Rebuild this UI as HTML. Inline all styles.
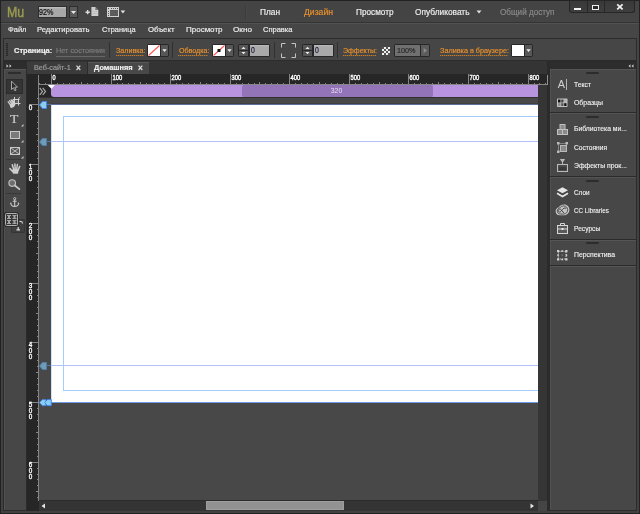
<!DOCTYPE html>
<html lang="ru"><head><meta charset="utf-8"><title>Adobe Muse</title>
<style>
html,body{margin:0;padding:0;}
body{width:640px;height:514px;overflow:hidden;background:#454545;font-family:"Liberation Sans",sans-serif;font-size:8.6px;color:#ededed;position:relative;}
.a{position:absolute;}
.t{position:absolute;white-space:nowrap;line-height:12px;height:12px;transform-origin:0 0;-webkit-text-stroke:0.18px currentColor;}
.o{color:#e8912d;}
.g{color:#8a8a8a;}
.ul{height:1px;background:repeating-linear-gradient(90deg,#c07a28 0,#c07a28 1px,#7a5a35 1px,#7a5a35 2px);}
svg{position:absolute;overflow:visible;}
</style></head><body>
<!-- window frame -->
<div class="a" style="left:0;top:0;width:640px;height:514px;background:#222222;"></div>
<div class="a" style="left:1px;top:1px;width:638px;height:512px;background:#414141;"></div>
<div class="a" style="left:1px;top:1px;width:638px;height:60px;background:#454545;"></div>
<div class="a" style="left:3px;top:61px;width:634px;height:450px;background:#2b2b2b;"></div>

<!-- app bar -->
<div id="appbar" class="a" style="left:1px;top:1px;width:638px;height:21px;background:#444444;"></div>
<div class="t" id="mu" style="left:6.8px;top:2.600px;font-size:14.700px;line-height:18px;height:18px;color:#9c9b50;-webkit-text-stroke:0.450px #9c9b50;transform:scaleX(0.843);">Mu</div>
<div class="a" style="left:38px;top:6px;width:29px;height:12px;background:linear-gradient(#c4c4c4 0,#a8a8a8 2px,#a8a8a8 100%);border:1px solid #2e2e2e;box-sizing:border-box;"></div>
<div class="t" id="zm" style="left:39.2px;top:6.400px;color:#111;font-size:8.800px;-webkit-text-stroke:0.2px #111;transform:scaleX(0.818);">92%</div>
<div class="a" style="left:69px;top:6px;width:9px;height:12px;background:#5a5a5a;border:1px solid #2e2e2e;box-sizing:border-box;"></div>
<svg style="left:69px;top:6px" width="9" height="12"><path d="M2 5h5l-2.5 3z" fill="#e8e8e8"/></svg>
<!-- add page icon -->
<svg style="left:84px;top:7px" width="16" height="11"><path d="M1.500 5.200h4.300M3.650 3.100v4.200" stroke="#dcdcdc" stroke-width="1.400" fill="none"/><path d="M7.400 0.100h4l2.900 2.900v6h-6.900z" fill="#cdcdcd"/><path d="M11.400 0.100v2.900h2.900z" fill="#6e6e6e"/><path d="M8.500 4.500h4.500M8.500 6.500h4.500" stroke="#b4b4b4" stroke-width="0.600"/></svg>
<!-- layout icon -->
<svg style="left:107px;top:7px" width="20" height="11"><rect x="0" y="0" width="12" height="10" fill="#d0d0d0"/><rect x="3" y="3" width="8" height="6" fill="#585858"/><path d="M3 5h8M3 7h8" stroke="#6a6a6a" stroke-width="0.600"/><path d="M1 1h1v1h-1zM4 1h1v1h-1zM6 1h1v1h-1zM8 1h1v1h-1zM10 1h1v1h-1zM1 4h1v1h-1zM1 6h1v1h-1zM1 8h1v1h-1z" fill="#555"/><path d="M13.600 3.400h4.600l-2.300 3z" fill="#e4e4e4"/></svg>
<div class="a" style="left:245px;top:6px;width:1px;height:13px;background:#3a3a3a;"></div>
<div class="a" style="left:246px;top:6px;width:1px;height:13px;background:#4a4a4a;"></div>
<div class="t" id="n1" style="left:260px;top:6px;font-size:8.500px;transform:scaleX(0.976);">План</div>
<div class="t o" id="n2" style="left:304px;top:6px;font-size:8.500px;transform:scaleX(1.015);">Дизайн</div>
<div class="t" id="n3" style="left:356px;top:6px;font-size:8.500px;transform:scaleX(0.966);">Просмотр</div>
<div class="t" id="n4" style="left:414.5px;top:6px;font-size:8.500px;transform:scaleX(0.981);">Опубликовать</div>
<svg style="left:476px;top:10px" width="7" height="5"><path d="M0.5 0.5h5l-2.5 3z" fill="#e0e0e0"/></svg>
<div class="t g" id="n5" style="left:500px;top:6px;font-size:8.500px;transform:scaleX(0.954);">Общий доступ</div>
<!-- window buttons -->
<div class="a" style="left:569px;top:0;width:66px;height:13px;background:linear-gradient(#383838,#3e3e3e);border:1px solid #262626;border-top:none;border-radius:0 0 3px 3px;box-sizing:border-box;"></div>
<div class="a" style="left:569px;top:0;width:66px;height:1px;background:#262626;"></div>
<div class="a" style="left:587px;top:1px;width:1px;height:11px;background:#282828;"></div>
<div class="a" style="left:604px;top:1px;width:1px;height:11px;background:#282828;"></div>
<div class="a" style="left:574px;top:8px;width:7px;height:2px;background:#f2f2f2;"></div>
<div class="a" style="left:592px;top:5px;width:7px;height:5px;border:1.500px solid #f2f2f2;box-sizing:border-box;background:#2c2c2c;"></div>
<svg style="left:616px;top:4px" width="8" height="6"><path d="M1.200 0.400l5.400 5M6.600 0.400l-5.400 5" stroke="#f2f2f2" stroke-width="1.700"/></svg>

<!-- menu bar -->
<div class="a" style="left:1px;top:22px;width:638px;height:1px;background:#343434;"></div><div class="a" style="left:1px;top:23px;width:638px;height:1px;background:#525252;"></div>
<div class="a" style="left:1px;top:24px;width:638px;height:14px;background:#464646;"></div>
<div class="t" id="m1" style="font-size:8px;left:7.5px;top:24px;transform:scaleX(0.940);">Файл</div>
<div class="t" id="m2" style="font-size:8px;left:37px;top:24px;transform:scaleX(0.950);">Редактировать</div>
<div class="t" id="m3" style="font-size:8px;left:102px;top:24px;transform:scaleX(0.924);">Страница</div>
<div class="t" id="m4" style="font-size:8px;left:147.5px;top:24px;transform:scaleX(0.972);">Объект</div>
<div class="t" id="m5" style="font-size:8px;left:185.5px;top:24px;transform:scaleX(0.999);">Просмотр</div>
<div class="t" id="m6" style="font-size:8px;left:233px;top:24px;transform:scaleX(1.022);">Окно</div>
<div class="t" id="m7" style="font-size:8px;left:263px;top:24px;transform:scaleX(0.940);">Справка</div>

<!--CBSTART-->
<!-- control bar -->
<div class="a" style="left:3px;top:38px;width:634px;height:23px;background:#464646;border:1px solid #2c2c2c;box-sizing:border-box;"></div>
<div class="a" style="left:6px;top:43px;width:2px;height:13px;background:repeating-linear-gradient(#2a2a2a 0,#2a2a2a 1px,#383838 1px,#383838 2px);"></div>
<div class="t" id="c1" style="font-size:7.700px;left:13.75px;top:45.200px;font-weight:bold;color:#f2f2f2;transform:scaleX(0.973);">Страница:</div>
<div class="t" id="c2" style="font-size:7.400px;left:55.5px;top:45.200px;color:#7e7e7e;transform:scaleX(0.983);">Нет состояния</div>
<div class="a" style="left:56px;top:56px;width:49px;height:1px;background:#686868;"></div>
<div class="a" style="left:109px;top:42px;width:1px;height:16px;background:#303030;"></div>
<div class="t o" id="c3" style="font-size:7.400px;left:115.5px;top:45.200px;transform:scaleX(0.967);">Заливка:</div>
<div class="a" style="left:147px;top:44px;width:22px;height:13px;background:#272727;border-radius:2px;"></div>
<div class="a" style="left:148px;top:45px;width:12px;height:11px;background:#fff;"></div>
<svg style="left:148px;top:45px" width="12" height="11"><path d="M0.500 10.500L11.500 0.500" stroke="#f55" stroke-width="1.100"/></svg>
<div class="a" style="left:161px;top:45px;width:7px;height:11px;background:#575757;"></div>
<svg style="left:161px;top:45px" width="7" height="11"><path d="M1.300 4.300h4.400l-2.200 2.600z" fill="#ececec"/></svg>
<div class="a" style="left:172px;top:42px;width:1px;height:16px;background:#303030;"></div>
<div class="t o" id="c4" style="font-size:7.400px;left:178.5px;top:45.200px;transform:scaleX(0.963);">Обводка:</div>
<div class="a" style="left:212px;top:44px;width:22px;height:13px;background:#272727;border-radius:2px;"></div>
<div class="a" style="left:213px;top:45px;width:12px;height:11px;background:#fff;"></div>
<svg style="left:213px;top:45px" width="12" height="11"><path d="M0.500 10.500L11.500 0.500" stroke="#f55" stroke-width="1.100"/><rect x="4.500" y="4" width="3" height="3" fill="#111"/></svg>
<div class="a" style="left:226px;top:45px;width:7px;height:11px;background:#575757;"></div>
<svg style="left:226px;top:45px" width="7" height="11"><path d="M1.300 4.300h4.400l-2.200 2.600z" fill="#ececec"/></svg>
<div class="a" style="left:238px;top:44px;width:32px;height:13px;background:#272727;border-radius:2px;"></div>
<div class="a" style="left:239px;top:45px;width:9px;height:5px;background:#565656;"></div>
<div class="a" style="left:239px;top:51px;width:9px;height:5px;background:#565656;"></div>
<svg style="left:239px;top:45px" width="9" height="11"><path d="M2.500 4l2-2.200 2 2.200zM2.500 7l2 2.200 2-2.200z" fill="#ececec"/></svg>
<div class="a" style="left:250px;top:45px;width:19px;height:11px;background:linear-gradient(#bcbcbc 0,#a9a9a9 2px);"></div>
<div class="t" style="left:251.2px;top:43.600px;font-size:8.600px;color:#16163c;transform:scaleX(0.800);">0</div>
<div class="a" style="left:274px;top:42px;width:1px;height:16px;background:#303030;"></div>
<svg style="left:281px;top:43px" width="15" height="15"><path d="M0.500 4.500V0.500H4.500M10.500 0.500h4V4.500M14.500 10.500v4H10.500M4.500 14.500H0.500V10.500" stroke="#c4c4c4" stroke-width="1" fill="none"/></svg>
<div class="a" style="left:302px;top:44px;width:32px;height:13px;background:#272727;border-radius:2px;"></div>
<div class="a" style="left:303px;top:45px;width:9px;height:5px;background:#565656;"></div>
<div class="a" style="left:303px;top:51px;width:9px;height:5px;background:#565656;"></div>
<svg style="left:303px;top:45px" width="9" height="11"><path d="M2.500 4l2-2.200 2 2.200zM2.500 7l2 2.200 2-2.200z" fill="#ececec"/></svg>
<div class="a" style="left:314px;top:45px;width:19px;height:11px;background:linear-gradient(#bcbcbc 0,#a9a9a9 2px);"></div>
<div class="t" style="left:315.2px;top:43.600px;font-size:8.600px;color:#16163c;transform:scaleX(0.800);">0</div>
<div class="a" style="left:337px;top:42px;width:1px;height:16px;background:#303030;"></div>
<div class="t o" id="c5" style="font-size:7.400px;left:343px;top:45.200px;transform:scaleX(0.954);">Эффекты:</div>
<svg style="left:382px;top:47px" width="8" height="8"><rect width="8" height="8" fill="#f0f0f0"/><path d="M0 0h2v2H0zM4 0h2v2H4zM2 2h2v2H2zM6 2h2v2H6zM0 4h2v2H0zM4 4h2v2H4zM2 6h2v2H2zM6 6h2v2H6z" fill="#555"/></svg>
<div class="a" style="left:394px;top:44px;width:36px;height:13px;background:#272727;border-radius:2px;"></div>
<div class="a" style="left:395px;top:45px;width:25px;height:11px;background:#707070;"></div>
<div class="t" id="pc" style="font-size:7.400px;left:397px;top:44.700px;color:#2a2a2a;transform:scaleX(0.979);">100%</div>
<div class="a" style="left:421px;top:45px;width:8px;height:11px;background:#5c5c5c;"></div>
<svg style="left:421px;top:45px" width="8" height="11"><path d="M2.700 3l3.300 2.500-3.300 2.500z" fill="#8c8c8c"/></svg>
<div class="t o" id="c6" style="font-size:7.400px;left:440px;top:45.200px;transform:scaleX(0.982);">Заливка в браузере:</div>
<div class="a" style="left:511px;top:44px;width:22px;height:13px;background:#272727;border-radius:2px;"></div>
<div class="a" style="left:512px;top:45px;width:12px;height:11px;background:#fff;"></div>
<div class="a" style="left:525px;top:45px;width:7px;height:11px;background:#575757;"></div>
<svg style="left:525px;top:45px" width="7" height="11"><path d="M1.300 4.300h4.400l-2.200 2.600z" fill="#ececec"/></svg>
<div class="a ul" style="left:116px;top:55px;width:28px;"></div>
<div class="a ul" style="left:178px;top:55px;width:30px;"></div>
<div class="a ul" style="left:343px;top:55px;width:33px;"></div>
<div class="a ul" style="left:440px;top:55px;width:68px;"></div>
<!--CBEND-->
<!--WORKSTART-->
<!-- tab bar -->
<div class="a" style="left:27px;top:61px;width:522px;height:13px;background:#343434;"></div>
<div class="a" style="left:27px;top:62px;width:60px;height:12px;background:#3b3b3b;"></div>
<div class="a" style="left:87px;top:61px;width:1px;height:13px;background:#2b2b2b;"></div>
<div class="a" style="left:88px;top:62px;width:61px;height:12px;background:#484848;border-top:1px solid #585858;box-sizing:border-box;"></div>
<div class="t" id="tb1" style="left:33.8px;top:62px;color:#9d9d9d;font-size:7.400px;transform:scaleX(0.980);">Веб-сайт-1</div>
<svg style="left:75.500px;top:65px" width="5" height="6"><path d="M0.500 0.600l3.800 4.400M4.300 0.600l-3.800 4.400" stroke="#dadada" stroke-width="1.250"/></svg>
<div class="t" id="tb2" style="left:93.6px;top:62px;color:#f0f0f0;font-weight:bold;font-size:7.400px;transform:scaleX(1.005);">Домашняя</div>
<svg style="left:138px;top:65px" width="5" height="6"><path d="M0.500 0.600l3.800 4.400M4.300 0.600l-3.800 4.400" stroke="#dadada" stroke-width="1.250"/></svg>
<!-- rulers -->
<div class="a" style="left:27px;top:74px;width:521px;height:24px;background:#262626;"></div>
<div class="a" style="left:26px;top:74px;width:13px;height:437px;background:#262626;"></div>
<div class="a" style="left:39px;top:98px;width:499px;height:403px;background:#484848;"></div>
<svg style="left:0;top:0;filter:grayscale(1)" width="640" height="514" font-family="Liberation Sans, sans-serif" font-size="6.900" fill="#ffffff" stroke="#ffffff" stroke-width="0.35"><g stroke="#858585" stroke-width="1" shape-rendering="crispEdges"><path d="M38.500 75V501"/><path d="M39 84.500H548"/><path d="M547.500 75V84"/><path d="M39.5 83V84M45.5 83V84M51.5 74V84M57.5 83V84M63.5 83V84M69.5 83V84M75.5 83V84M81.5 82V84M87.5 83V84M93.5 83V84M99.5 83V84M105.5 83V84M111.5 74V84M117.5 83V84M122.5 83V84M128.5 83V84M134.5 83V84M140.5 82V84M146.5 83V84M152.5 83V84M158.5 83V84M164.5 83V84M170.5 74V84M176.5 83V84M182.5 83V84M188.5 83V84M194.5 83V84M200.5 82V84M206.5 83V84M212.5 83V84M218.5 83V84M224.5 83V84M230.5 74V84M236.5 83V84M242.5 83V84M248.5 83V84M254.5 83V84M259.5 82V84M265.5 83V84M271.5 83V84M277.5 83V84M283.5 83V84M289.5 74V84M295.5 83V84M301.5 83V84M307.5 83V84M313.5 83V84M319.5 82V84M325.5 83V84M331.5 83V84M337.5 83V84M343.5 83V84M349.5 74V84M355.5 83V84M361.5 83V84M367.5 83V84M373.5 83V84M379.5 82V84M385.5 83V84M391.5 83V84M397.5 83V84M402.5 83V84M408.5 74V84M414.5 83V84M420.5 83V84M426.5 83V84M432.5 83V84M438.5 82V84M444.5 83V84M450.5 83V84M456.5 83V84M462.5 83V84M468.5 74V84M474.5 83V84M480.5 83V84M486.5 83V84M492.5 83V84M498.5 82V84M504.5 83V84M510.5 83V84M516.5 83V84M522.5 83V84M528.5 74V84M534.5 83V84M539.5 83V84M545.5 83V84"/><path d="M37 98.5H38M29 104.5H38M37 110.5H38M37 116.5H38M37 122.5H38M37 128.5H38M36 134.5H38M37 140.5H38M37 146.5H38M37 152.5H38M37 158.5H38M29 164.5H38M37 170.5H38M37 176.5H38M37 181.5H38M37 187.5H38M36 193.5H38M37 199.5H38M37 205.5H38M37 211.5H38M37 217.5H38M29 223.5H38M37 229.5H38M37 235.5H38M37 241.5H38M37 247.5H38M36 253.5H38M37 259.5H38M37 265.5H38M37 271.5H38M37 277.5H38M29 283.5H38M37 289.5H38M37 295.5H38M37 301.5H38M37 307.5H38M36 313.5H38M37 319.5H38M37 325.5H38M37 330.5H38M37 336.5H38M29 342.5H38M37 348.5H38M37 354.5H38M37 360.5H38M37 366.5H38M36 372.5H38M37 378.5H38M37 384.5H38M37 390.5H38M37 396.5H38M29 402.5H38M37 408.5H38M37 414.5H38M37 420.5H38M37 426.5H38M36 432.5H38M37 438.5H38M37 444.5H38M37 450.5H38M37 456.5H38M29 462.5H38M37 468.5H38M37 474.5H38M37 479.5H38M37 485.5H38M36 491.5H38M37 497.5H38"/></g><text x="52.6" y="80.100" textLength="3.1" lengthAdjust="spacingAndGlyphs">0</text><text x="112.6" y="80.100" textLength="9.7" lengthAdjust="spacingAndGlyphs">100</text><text x="171.6" y="80.100" textLength="9.7" lengthAdjust="spacingAndGlyphs">200</text><text x="231.6" y="80.100" textLength="9.7" lengthAdjust="spacingAndGlyphs">300</text><text x="290.6" y="80.100" textLength="9.7" lengthAdjust="spacingAndGlyphs">400</text><text x="350.6" y="80.100" textLength="9.7" lengthAdjust="spacingAndGlyphs">500</text><text x="409.6" y="80.100" textLength="9.7" lengthAdjust="spacingAndGlyphs">600</text><text x="469.6" y="80.100" textLength="9.7" lengthAdjust="spacingAndGlyphs">700</text><text x="529.6" y="80.100" textLength="9.7" lengthAdjust="spacingAndGlyphs">800</text><text x="28.700" stroke-width="0.3" y="109.6" font-size="6.4">0</text><text x="28.700" stroke-width="0.3" y="169.1" font-size="6.3">1</text><text x="28.700" stroke-width="0.3" y="174.8" font-size="6.3">0</text><text x="28.700" stroke-width="0.3" y="180.5" font-size="6.3">0</text><text x="28.700" stroke-width="0.3" y="228.1" font-size="6.3">2</text><text x="28.700" stroke-width="0.3" y="233.8" font-size="6.3">0</text><text x="28.700" stroke-width="0.3" y="239.5" font-size="6.3">0</text><text x="28.700" stroke-width="0.3" y="288.1" font-size="6.3">3</text><text x="28.700" stroke-width="0.3" y="293.8" font-size="6.3">0</text><text x="28.700" stroke-width="0.3" y="299.5" font-size="6.3">0</text><text x="28.700" stroke-width="0.3" y="347.1" font-size="6.3">4</text><text x="28.700" stroke-width="0.3" y="352.8" font-size="6.3">0</text><text x="28.700" stroke-width="0.3" y="358.5" font-size="6.3">0</text><text x="28.700" stroke-width="0.3" y="407.1" font-size="6.3">5</text><text x="28.700" stroke-width="0.3" y="412.8" font-size="6.3">0</text><text x="28.700" stroke-width="0.3" y="418.5" font-size="6.3">0</text><text x="28.700" stroke-width="0.3" y="467.1" font-size="6.3">6</text><text x="28.700" stroke-width="0.3" y="472.8" font-size="6.3">0</text><text x="28.700" stroke-width="0.3" y="478.5" font-size="6.3">0</text></svg>
<!-- breakpoint bar -->
<div class="a" style="left:51px;top:85px;width:487px;height:12px;background:#b793e0;border-radius:3px 0 0 3px;"></div>
<div class="a" style="left:242px;top:85px;width:191px;height:12px;background:#9474b8;border-radius:2px;"></div>
<div class="t" style="left:321.500px;top:84.700px;width:30px;text-align:center;font-size:6.800px;color:#e6dcf2;line-height:12px;-webkit-text-stroke:0;filter:grayscale(0);">320</div>
<svg style="left:39px;top:85px" width="18" height="12"><path d="M8.700 0h7.300l-3.650 3.800z" fill="#fff"/><path d="M0.700 2.800l2.800 3.600-2.800 3.600M3.700 2.800l2.800 3.600-2.800 3.600" stroke="#b0b0b0" stroke-width="1.100" fill="none"/></svg>
<div class="a" style="left:39px;top:97px;width:499px;height:1px;background:#303030;"></div>
<div class="a" style="left:51px;top:103px;width:487px;height:1px;background:#3f3f3f;"></div>
<div class="a" style="left:47px;top:104px;width:491px;height:1px;background:#5b6f98;"></div>
<!-- page -->
<div class="a" style="left:51px;top:105px;width:487px;height:298px;background:#fff;overflow:hidden;"><div class="a" style="left:0;top:0;width:1px;height:298px;background:#cfe2f8;"></div><div class="a" style="left:12px;top:11px;width:600px;height:273px;border:1px solid #a3ccff;"></div><div class="a" style="left:0;top:36px;width:487px;height:1px;background:#b2c2f8;"></div><div class="a" style="left:0;top:260px;width:487px;height:1px;background:#b2c2f8;"></div><div class="a" style="left:0;top:297px;width:487px;height:1px;background:#6f9ae8;"></div></div>
<div class="a" style="left:46px;top:141px;width:5px;height:1px;background:#55789f;"></div>
<div class="a" style="left:46px;top:365px;width:5px;height:1px;background:#55789f;"></div>
<svg style="left:39px;top:101px" width="9" height="8"><path d="M0.500 4L3.500 0.500H7.500V7.500H3.500z" fill="#8acff2" stroke="#3d86ea" stroke-width="1"/></svg>
<svg style="left:39px;top:138px" width="9" height="8"><path d="M0.500 4L3.500 0.500H7.500V7.500H3.500z" fill="#6e9bb8" stroke="#4f7fa8" stroke-width="1"/></svg>
<svg style="left:39px;top:362px" width="9" height="8"><path d="M0.500 4L3.500 0.500H7.500V7.500H3.500z" fill="#6e9bb8" stroke="#4f7fa8" stroke-width="1"/></svg>
<svg style="left:39px;top:399px" width="13" height="8"><path d="M0.400 3.600L3.300 0.600H7V6.700H3.300z" fill="#8acff2" stroke="#3d7eea" stroke-width="0.900"/><path d="M5.700 3.600L8.300 0.600H12.300V6.700H8.300z" fill="#8acff2" stroke="#3d7eea" stroke-width="0.900"/></svg>
<!-- scrollbars -->
<div class="a" style="left:538px;top:85px;width:9px;height:416px;background:#353535;"></div>
<div class="a" style="left:547px;top:61px;width:3px;height:450px;background:#2b2b2b;"></div>
<div class="a" style="left:547px;top:75px;width:1px;height:10px;background:#8e8e8e;"></div>
<div class="a" style="left:39px;top:500px;width:499px;height:11px;background:#343434;border-top:1px solid #2c2c2c;box-sizing:border-box;"></div>
<div class="a" style="left:538px;top:501px;width:9px;height:10px;background:#454545;"></div>
<div class="a" style="left:206px;top:501px;width:138px;height:9px;background:#929292;border:1px solid #9e9e9e;box-sizing:border-box;"></div>
<svg style="left:41px;top:503px" width="5" height="6"><path d="M4 0.500v5L0.500 3z" fill="#e6e6e6"/></svg>
<svg style="left:530px;top:503px" width="5" height="6"><path d="M0.500 0.500v5L4 3z" fill="#e6e6e6"/></svg>
<!--WORKEND-->
<!--TBSTART-->
<!-- left toolbar -->
<div class="a" style="left:3px;top:61px;width:24px;height:450px;background:#2b2b2b;"></div>
<div class="a" style="left:3px;top:62px;width:24px;height:7px;background:#2d2d2d;"></div>
<svg style="left:6px;top:64px" width="6" height="4"><path d="M0.500 0.300l2 1.700-2 1.700zM3.500 0.300l2 1.700-2 1.700z" fill="#c8c8c8"/></svg>
<div class="a" style="left:4px;top:69px;width:22px;height:441px;background:#474747;border-top:1px solid #565656;border-left:1px solid #505050;box-sizing:border-box;"></div>
<div class="a" style="left:8px;top:72px;width:13px;height:2px;background:#2e2e2e;"></div>
<div class="a" style="left:6px;top:79px;width:17px;height:15px;background:#353535;border:1px solid #2c2c2c;box-sizing:border-box;"></div>
<!-- selection arrow -->
<svg style="left:10px;top:80px" width="10" height="13"><path d="M1.500 1.200v8.300l2-1.800 1.300 3 1.300-0.600-1.300-2.900h2.700z" fill="#2a2a2a" stroke="#b4b4b4" stroke-width="0.900" stroke-linejoin="round"/></svg>
<!-- crop tool -->
<svg style="left:7px;top:96px" width="15" height="13"><path d="M7.500 1v7M6 3.500h6.500M11.500 2.500v7M7 7.500h6.500" stroke="#d2d2d2" stroke-width="1" fill="none"/><path d="M13.200 0.800l-2.200 2.400" stroke="#bdbdbd" stroke-width="0.900"/><rect x="8.500" y="4.500" width="2.500" height="2.500" fill="#6a6a6a"/><path d="M1.200 5.800l2.300 3M2.600 4.600l2.300 3.200M4.200 3.900l1.900 3.300M5.800 4l1.200 3" stroke="#d0d0d0" stroke-width="1.300" stroke-linecap="round" fill="none"/><path d="M2.600 8.200l4.600-2 1.300 2.300-1.600 2.600-2.400 1-1.200-0.600z" fill="#d0d0d0"/></svg>
<!-- text tool -->
<div class="t" style="left:9.500px;top:112px;font-family:'Liberation Serif',serif;font-size:13px;line-height:13px;height:13px;color:#cdcdcd;transform:scaleX(1.05);">T</div>
<svg style="left:21px;top:124px" width="3" height="3"><path d="M2.500 0v2.500H0z" fill="#c8c8c8"/></svg>
<!-- rectangle tool -->
<div class="a" style="left:10px;top:131px;width:10px;height:8px;background:#7a7a7a;border:1px solid #c8c8c8;box-sizing:border-box;"></div>
<svg style="left:21px;top:140px" width="3" height="3"><path d="M2.500 0v2.500H0z" fill="#c8c8c8"/></svg>
<!-- placeholder tool -->
<svg style="left:10px;top:147px" width="10" height="8"><rect x="0.500" y="0.500" width="9" height="7" fill="#555" stroke="#c8c8c8"/><path d="M1 1l8 6M9 1l-8 6" stroke="#c8c8c8" stroke-width="0.900"/></svg>
<svg style="left:21px;top:156px" width="3" height="3"><path d="M2.500 0v2.500H0z" fill="#c8c8c8"/></svg>
<div class="a" style="left:6px;top:159px;width:15px;height:1px;background:#383838;"></div>
<!-- hand tool -->
<svg style="left:9px;top:163px" width="12" height="11"><g stroke="#cdcdcd" stroke-width="1.500" stroke-linecap="round" fill="none"><path d="M0.900 5.600l3 3M3.300 1.800l1.500 5M5.900 1l0.300 6M8.400 1.500l-0.800 5.500M10.700 3.400l-1.700 4"/></g><path d="M3.300 6.500h6.400l-0.700 4.200h-4.600l-1.600-2.700z" fill="#cdcdcd"/></svg>
<!-- zoom tool -->
<svg style="left:8px;top:179px" width="13" height="11"><circle cx="4.200" cy="4.100" r="3.300" fill="#6e6e6e" stroke="#c4c4c4" stroke-width="1.100"/><path d="M6.800 6.500l4.600 3.600" stroke="#c8c8c8" stroke-width="1.800" stroke-linecap="round"/></svg>
<div class="a" style="left:6px;top:193px;width:15px;height:1px;background:#383838;"></div>
<!-- anchor -->
<svg style="left:10px;top:197px" width="10" height="11"><circle cx="4.700" cy="1.700" r="1.100" fill="none" stroke="#cbcbcb" stroke-width="0.900"/><path d="M4.700 2.800v6.500M2.700 4.300h4M0.700 6.300c0.300 2.200 1.800 3.200 4 3.200s3.700-1 4-3.200" fill="none" stroke="#cbcbcb" stroke-width="1.100"/><path d="M0 6.800l0.800-1.500 1.200 1.200zM9.400 6.800l-0.800-1.500-1.200 1.200z" fill="#cbcbcb"/></svg>
<!-- align widget -->
<div class="a" style="left:11px;top:219px;width:14px;height:14px;background:#3f3f3f;border:1px solid #353535;box-sizing:border-box;border-radius:1px;"></div>
<svg style="left:11px;top:219px" width="14" height="14"><path d="M8.500 2.500h1.500q1.500 0 1.500 2" fill="none" stroke="#e0e0e0" stroke-width="1.100"/><path d="M7.200 8v2.500M5.500 10.800h3.500" stroke="#e0e0e0" stroke-width="1.200" fill="none"/></svg>
<div class="a" style="left:4px;top:212px;width:15px;height:15px;background:#2e2e2e;border-radius:2px;"></div>
<div class="a" style="left:5px;top:213px;width:13px;height:13px;background:#3a3a3a;border:1px solid #b0b0b0;box-sizing:border-box;border-radius:1.500px;"></div>
<svg style="left:5px;top:213px" width="13" height="13"><g fill="#a4a4a4"><path d="M2 2h4v1h-1v2h1v1h-4v-1h1v-2h-1z"/><path d="M7.500 2h4v1h-1v2h1v1h-4v-1h1v-2h-1z"/><path d="M2 7h4v1h-1v2h1v1h-4v-1h1v-2h-1z"/><path d="M7.500 7h4v1h-1v2h1v1h-4v-1h1v-2h-1z"/></g></svg>
<!--TBEND-->
<!--PNSTART-->
<!-- right panel -->
<div class="a" style="left:550px;top:61px;width:87px;height:450px;background:#2b2b2b;"></div>
<div class="a" style="left:550px;top:62px;width:87px;height:7px;background:#2d2d2d;"></div>
<svg style="left:628px;top:64px" width="6" height="4"><path d="M2.500 0.300l-2 1.700 2 1.700zM5.500 0.300l-2 1.700 2 1.700z" fill="#c8c8c8"/></svg>
<div class="a" style="left:550px;top:69px;width:86px;height:43px;background:#474747;border-top:1px solid #555;border-left:1px solid #525252;box-sizing:border-box;"></div>
<div class="a" style="left:586px;top:72px;width:13px;height:2px;background:#2c2c2c;border-radius:1px;"></div>
<div class="a" style="left:550px;top:113px;width:86px;height:63px;background:#474747;border-top:1px solid #555;border-left:1px solid #525252;box-sizing:border-box;"></div>
<div class="a" style="left:586px;top:116px;width:13px;height:2px;background:#2c2c2c;border-radius:1px;"></div>
<div class="a" style="left:550px;top:177px;width:86px;height:62px;background:#474747;border-top:1px solid #555;border-left:1px solid #525252;box-sizing:border-box;"></div>
<div class="a" style="left:586px;top:180px;width:13px;height:2px;background:#2c2c2c;border-radius:1px;"></div>
<div class="a" style="left:550px;top:240px;width:86px;height:25px;background:#474747;border-top:1px solid #555;border-left:1px solid #525252;box-sizing:border-box;"></div>
<div class="a" style="left:586px;top:242px;width:13px;height:2px;background:#2c2c2c;border-radius:1px;"></div>
<div class="a" style="left:550px;top:266px;width:86px;height:244px;background:#474747;border-top:1px solid #555;border-left:1px solid #525252;box-sizing:border-box;"></div>
<div class="t" id="p1" style="left:574px;top:78.6px;font-size:6.9px;color:#f6f6f6;-webkit-text-stroke:0.1px #f6f6f6;transform:scaleX(0.979);">Текст</div>
<div class="t" id="p2" style="left:574px;top:96.8px;font-size:6.9px;color:#f6f6f6;-webkit-text-stroke:0.1px #f6f6f6;transform:scaleX(1.002);">Образцы</div>
<div class="t" id="p3" style="left:574px;top:123.3px;font-size:6.9px;color:#f6f6f6;-webkit-text-stroke:0.1px #f6f6f6;transform:scaleX(0.987);">Библиотека ми...</div>
<div class="t" id="p4" style="left:574px;top:141.5px;font-size:6.9px;color:#f6f6f6;-webkit-text-stroke:0.1px #f6f6f6;transform:scaleX(0.962);">Состояния</div>
<div class="t" id="p5" style="left:574px;top:159.5px;font-size:6.9px;color:#f6f6f6;-webkit-text-stroke:0.1px #f6f6f6;transform:scaleX(0.992);">Эффекты прок...</div>
<div class="t" id="p6" style="left:574px;top:186.9px;font-size:6.9px;color:#f6f6f6;-webkit-text-stroke:0.1px #f6f6f6;transform:scaleX(0.925);">Слои</div>
<div class="t" id="p7" style="left:574px;top:205.0px;font-size:6.9px;color:#f6f6f6;-webkit-text-stroke:0.1px #f6f6f6;transform:scaleX(0.914);">CC Libraries</div>
<div class="t" id="p8" style="left:574px;top:222.5px;font-size:6.9px;color:#f6f6f6;-webkit-text-stroke:0.1px #f6f6f6;transform:scaleX(0.964);">Ресурсы</div>
<div class="t" id="p9" style="left:574px;top:249.3px;font-size:6.9px;color:#f6f6f6;-webkit-text-stroke:0.1px #f6f6f6;transform:scaleX(0.997);">Перспектива</div>
<!-- panel icons -->
<!-- Text -->
<div class="t" style="left:557.800px;top:78.200px;font-size:10.800px;line-height:12px;color:#d2d2d2;-webkit-text-stroke:0;filter:grayscale(1);">A</div>
<div class="a" style="left:566px;top:79px;width:1px;height:11px;background:#b4b4b4;"></div>
<!-- Swatches -->
<svg style="left:557px;top:98px" width="11" height="9"><rect x="0" y="0.500" width="10.500" height="8.500" rx="0.800" fill="#c4c4c4"/><rect x="1" y="1.500" width="2.500" height="3" fill="#111"/><rect x="4.200" y="1.500" width="2.300" height="3" fill="#444"/><rect x="7.200" y="1.500" width="2.300" height="3" fill="#b0b0b0"/><rect x="1" y="5.200" width="2.500" height="2.800" fill="#8a8a8a"/><rect x="4.200" y="5.200" width="2.300" height="2.800" fill="#555"/><rect x="7.200" y="5.200" width="2.300" height="2.800" fill="#111"/></svg>
<!-- Library -->
<svg style="left:557px;top:124px" width="11" height="11"><rect x="3" y="0.500" width="5" height="5" fill="#8a8a8a" stroke="#c0c0c0"/><rect x="0.500" y="5.500" width="5" height="5" fill="#8a8a8a" stroke="#c0c0c0"/><rect x="5.500" y="5.500" width="5" height="5" fill="#8a8a8a" stroke="#c0c0c0"/></svg>
<!-- States -->
<svg style="left:557px;top:142px" width="11" height="11"><rect x="1.500" y="1.500" width="8" height="8" fill="none" stroke="#bdbdbd" stroke-dasharray="1 1"/><rect x="3.500" y="3.500" width="6" height="6" fill="#8a8a8a" stroke="#bababa"/><rect x="0" y="0" width="2.500" height="2.500" fill="#bababa"/><rect x="0" y="8.500" width="2.500" height="2.500" fill="#bababa"/><rect x="8.500" y="0" width="2.500" height="2.500" fill="#bababa"/></svg>
<!-- Scroll effects -->
<svg style="left:557px;top:159px" width="11" height="14"><path d="M3.500 0.500h4l-2 2.500zM5.500 3v3" stroke="#bababa" stroke-width="1" fill="#bababa"/><rect x="0.500" y="5.500" width="10" height="7" fill="#4a4a4a" stroke="#bababa"/><rect x="2" y="8" width="7" height="3" fill="#3a3a3a"/></svg>
<!-- Layers -->
<svg style="left:556px;top:187px" width="13" height="11"><path d="M6.500 0.300L12 3.300 6.500 6.300 1 3.300z" fill="#e6e6e6"/><path d="M1 6.300l5.500 3.200L12 6.300" fill="none" stroke="#e6e6e6" stroke-width="1.600"/></svg>
<!-- CC -->
<svg style="left:555px;top:204px" width="15" height="12"><path d="M4.800 11.300C2.200 11.300 0.600 9.500 0.600 7.200C0.600 5.200 2 3.600 3.900 3.200C4.800 1.600 6.800 0.600 9.200 0.600C12.200 0.600 14.400 2.900 14.400 5.800C14.400 8.900 12 11.300 9.200 11.300Z" fill="#c9c9c9"/><path d="M4.800 11.300C2.200 11.300 0.600 9.500 0.600 7.200C0.600 5.200 2 3.600 3.900 3.200C4.800 1.600 6.800 0.600 9.200 0.600C12.200 0.600 14.400 2.900 14.400 5.800C14.400 8.900 12 11.300 9.200 11.300Z" fill="#c0c0c0" stroke="#3c3c3c" stroke-width="1.100" transform="translate(7.500 6.100) scale(0.760) translate(-7.500 -6.100)"/><path d="M11.300 4.300c-1.700-0.700-3 0-4 1.300l-1.300 1.700c-0.700 0.900-1.700 0.900-2.300 0.300-0.700-0.700-0.400-1.900 0.500-2.300 0.800-0.300 1.500 0 2 0.600l2.700 3.100" fill="none" stroke="#3c3c3c" stroke-width="0.900"/></svg>
<!-- Assets briefcase -->
<svg style="left:557px;top:223px" width="11" height="11"><path d="M3.500 2.500v-2h4v2" fill="none" stroke="#d6d6d6"/><rect x="0.500" y="2.500" width="10" height="8" fill="#5a5a5a" stroke="#d6d6d6"/><path d="M0.500 6h10" stroke="#d6d6d6"/><rect x="4.500" y="5" width="2" height="2" fill="#e6e6e6"/></svg>
<!-- Perspective -->
<svg style="left:557px;top:250px" width="11" height="11"><rect x="1.500" y="1.500" width="7.500" height="7.500" fill="none" stroke="#bdbdbd" stroke-dasharray="1 1"/><path d="M0 0h2.300v2.300H0zM8.200 0h2.300v2.300H8.200zM0 8.200h2.300v2.300H0zM8.200 8.200h2.300v2.300H8.200zM4.200 0.300h2v1.500h-2zM4.200 8.700h2v1.500h-2zM0.300 4.200h1.500v2h-1.500zM8.700 4.200h1.500v2h-1.500z" fill="#d2d2d2"/><rect x="4.700" y="4.200" width="1" height="2" fill="#7a7a7a"/></svg>
<!--PNEND-->
</body></html>
